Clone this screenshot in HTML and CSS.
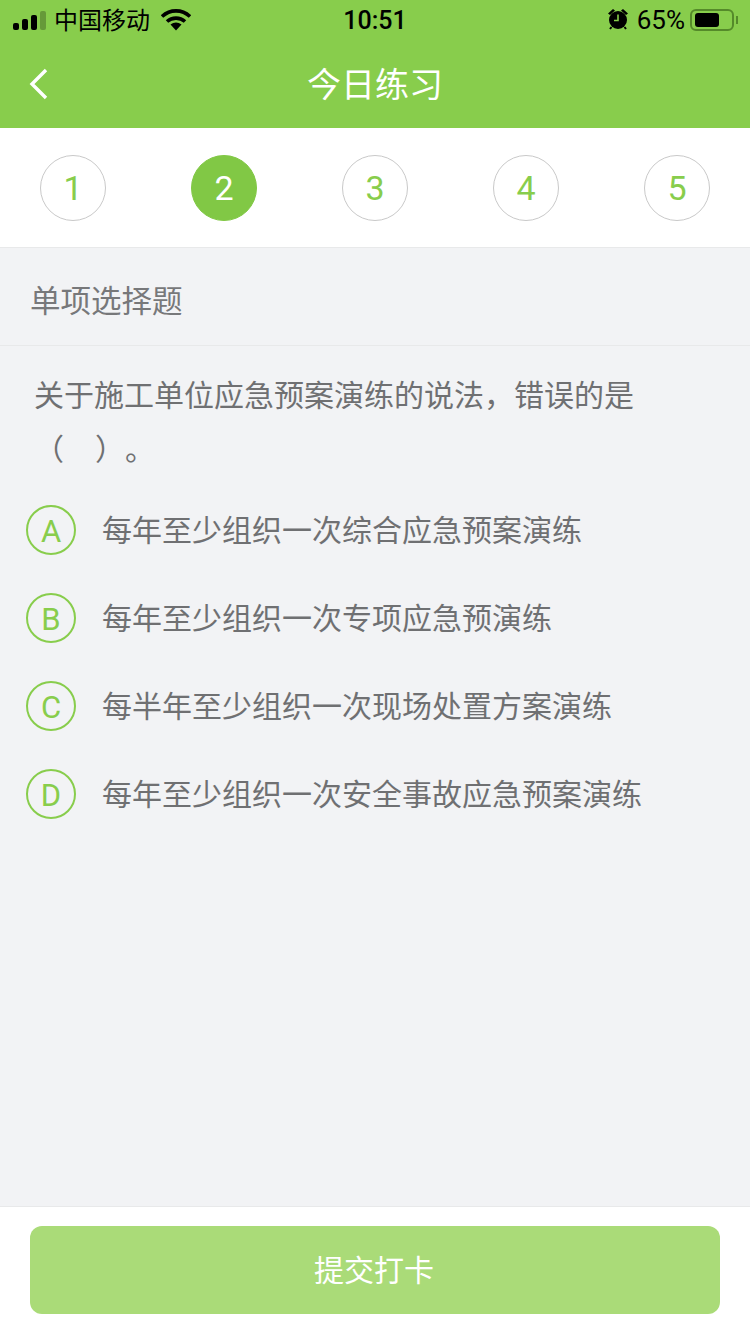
FILE: index.html
```html
<!DOCTYPE html>
<html lang="zh-CN">
<head>
  <meta charset="UTF-8">
  <meta name="viewport" content="width=device-width, initial-scale=1.0">
  <title>今日练习</title>
  <link rel="stylesheet" href="styles.css">
</head>
<body>
  <header class="top">
    <div class="status">
      <div class="status-left">
        <svg class="signal" width="36" height="20" viewBox="0 0 36 20">
          <rect x="1" y="13" width="6" height="7" rx="2" fill="#000"/>
          <rect x="10" y="9" width="6" height="11" rx="2" fill="#000"/>
          <rect x="19" y="5" width="6" height="15" rx="2" fill="#000"/>
          <rect x="28" y="1" width="6" height="19" rx="2" fill="#000" opacity="0.25"/>
        </svg>
        <span class="carrier">中国移动</span>
        <svg class="wifi" width="30" height="22" viewBox="0 0 30 22">
          <path d="M1 7.500C9 0 21 0 29 7.500" fill="none" stroke="#000" stroke-width="3.600"/>
          <path d="M6 12.500C11 8 19 8 24 12.500" fill="none" stroke="#000" stroke-width="3.600"/>
          <path d="M9.500 15.500C13 12.700 17 12.700 20.500 15.500L15 21.500Z" fill="#000"/>
        </svg>
      </div>
      <div class="clock">10:51</div>
      <div class="status-right">
        <svg class="alarm" width="20" height="22" viewBox="0 0 20 22">
          <circle cx="10" cy="12" r="9" fill="#000"/>
          <path d="M0 5.500L5 1L7 2.500L2 7Z M20 5.500L15 1L13 2.500L18 7Z" fill="#000"/>
          <path d="M3.500 19L2 21M16.500 19L18 21" stroke="#000" stroke-width="2"/>
          <path d="M10 6.500V12.500H6" fill="none" stroke="#88cd4c" stroke-width="1.600"/>
        </svg>
        <span class="percent">65%</span>
        <div class="battery"><div class="battery-fill"></div></div>
        <div class="battery-cap"></div>
      </div>
    </div>
    <nav class="nav">
      <svg class="back" width="20" height="32" viewBox="0 0 20 32">
        <path d="M17 2L3 16L17 30" fill="none" stroke="#fff" stroke-width="3.400"/>
      </svg>
      <h1 class="title">今日练习</h1>
    </nav>
  </header>

  <div class="steps">
    <div class="step">1</div>
    <div class="step active">2</div>
    <div class="step">3</div>
    <div class="step">4</div>
    <div class="step">5</div>
  </div>

  <main class="content">
    <div class="type">单项选择题</div>
    <p class="question">关于施工单位应急预案演练的说法，错误的是<br>（&nbsp;&nbsp;&nbsp;&#8201;）。</p>
    <ul class="options">
      <li class="option"><span class="letter">A</span><span class="option-text">每年至少组织一次综合应急预案演练</span></li>
      <li class="option"><span class="letter">B</span><span class="option-text">每年至少组织一次专项应急预演练</span></li>
      <li class="option"><span class="letter">C</span><span class="option-text">每半年至少组织一次现场处置方案演练</span></li>
      <li class="option"><span class="letter">D</span><span class="option-text">每年至少组织一次安全事故应急预案演练</span></li>
    </ul>
  </main>

  <footer class="bottom">
    <button class="submit" type="button">提交打卡</button>
  </footer>
</body>
</html>
```

FILE: styles.css
```css
* {
  box-sizing: border-box;
}

html, body {
  height: 1334px;
}

body {
  margin: 0;
  display: flex;
  flex-direction: column;
  overflow: hidden;
  font-family: "Liberation Sans", "Noto Sans CJK SC", sans-serif;
  background-color: #f2f3f5;
  color: #6f7072;
}

.top {
  height: 128px;
  background-color: #88cd4c;
}

.status {
  height: 40px;
  display: flex;
  justify-content: space-between;
  align-items: center;
  padding: 0 12px;
  position: relative;
  color: #000;
}

.status-left,
.status-right {
  display: flex;
  align-items: center;
}

.carrier {
  margin-left: 6px;
  margin-top: -3px;
  font-size: 24px;
}

.wifi {
  margin-left: 11px;
}

.clock {
  position: absolute;
  left: 0;
  right: 0;
  text-align: center;
  font-family: Roboto, sans-serif;
  font-size: 25px;
  font-weight: 500;
}

.alarm {
  margin-right: 9px;
  margin-top: -2px;
}

.percent {
  font-family: Roboto, sans-serif;
  font-size: 26px;
}

.battery {
  width: 44px;
  height: 22px;
  margin-left: 5px;
  padding: 2px 3px;
  border: 2px solid #558a2a;
  border-radius: 6px;
}

.battery-fill {
  width: 24px;
  height: 100%;
  background-color: #000;
  border-radius: 3px;
}

.battery-cap {
  width: 2px;
  height: 8px;
  margin-left: 2px;
  background-color: #558a2a;
}

.nav {
  height: 88px;
  display: flex;
  align-items: center;
  justify-content: center;
  position: relative;
}

.back {
  position: absolute;
  left: 29px;
  top: 28px;
}

.title {
  margin: -4px 0 0;
  font-size: 34px;
  font-weight: normal;
  color: #fff;
}

.steps {
  height: 120px;
  display: flex;
  justify-content: space-between;
  align-items: center;
  padding: 0 40px;
  background-color: #fff;
  border-bottom: 1px solid #e8e9ea;
}

.step {
  width: 66px;
  height: 66px;
  display: flex;
  align-items: center;
  justify-content: center;
  border: 1px solid #c9c9c9;
  border-radius: 50%;
  font-family: Roboto, sans-serif;
  font-size: 34px;
  color: #88cd4c;
}

.step.active {
  background-color: #81c845;
  border-color: #81c845;
  color: #fff;
}

.content {
  flex: 1;
}

.type {
  height: 98px;
  display: flex;
  align-items: center;
  padding: 4px 30px 0;
  font-size: 30.500px;
  color: #77787a;
  border-bottom: 1px solid #e8e9ea;
}

.question {
  margin: 23px 0 0;
  padding: 0 34px;
  font-size: 30px;
  line-height: 54px;
  text-spacing-trim: space-all;
}

.options {
  list-style: none;
  margin: 9px 0 0;
  padding: 0;
}

.option {
  height: 88px;
  display: flex;
  align-items: center;
  padding-left: 26px;
  font-size: 30px;
}

.option-text {
  margin-top: -5px;
}

.letter {
  width: 50px;
  height: 50px;
  margin-right: 26px;
  padding-top: 2px;
  display: flex;
  align-items: center;
  justify-content: center;
  border: 2px solid #88cd4c;
  border-radius: 50%;
  font-family: Roboto, sans-serif;
  font-size: 31px;
  color: #88cd4c;
}

.bottom {
  height: 128px;
  padding: 19px 30px 20px;
  background-color: #fff;
  border-top: 1px solid #e8e9ea;
}

.submit {
  width: 100%;
  height: 88px;
  padding: 0 2px 4px 0;
  border: none;
  border-radius: 12px;
  background-color: #aadb78;
  color: #fff;
  font-family: inherit;
  font-size: 30px;
}
```
